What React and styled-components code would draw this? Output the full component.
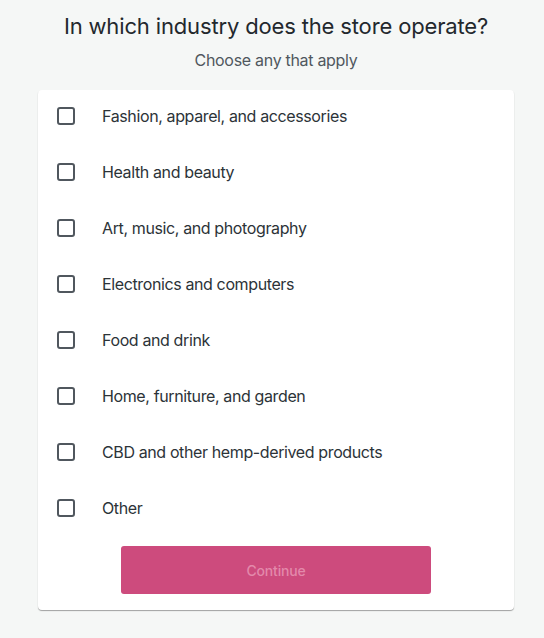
import React from 'react';
import styled, { createGlobalStyle } from 'styled-components';

const GlobalStyle = createGlobalStyle`
  body {
    margin: 0;
    background: #f5f7f6;
    font-family: Inter, "Open Sans", "Liberation Sans", sans-serif;
    -webkit-font-smoothing: antialiased;
  }
`

const Page = styled.div`
  display: flex;
  flex-direction: column;
  align-items: stretch;
  padding: 12px 30px 28px 38px;
`

const Title = styled.h1`
  margin: 0;
  text-align: center;
  font-size: 22px;
  font-weight: 400;
  line-height: 28px;
  color: #23282d;
  letter-spacing: -0.15px;
`

const Subtitle = styled.p`
  margin: 10px 0 20px;
  text-align: center;
  font-size: 16px;
  line-height: 20px;
  color: #50575e;
  letter-spacing: -0.3px;
`

const Card = styled.div`
  display: flex;
  flex-direction: column;
  gap: 4px;
  background: #fff;
  border-radius: 4px;
  box-shadow: 0 1px 1px rgba(0, 0, 0, 0.35);
  padding: 0 0 16px;
`

const Row = styled.label`
  display: flex;
  align-items: center;
  height: 52px;
  padding-left: 19px;
  cursor: pointer;
`

const Box = styled.span`
  box-sizing: border-box;
  width: 18px;
  height: 18px;
  border: 2px solid #50575e;
  border-radius: 3px;
  margin-right: 27px;
  flex-shrink: 0;
`

const Label = styled.span`
  font-size: 16px;
  color: #2c3338;
  letter-spacing: -0.38px;
`

const Button = styled.button`
  align-self: center;
  margin-top: 8px;
  width: 310px;
  height: 48px;
  border: none;
  border-radius: 3px;
  background: #cd4b7d;
  color: #e389ab;
  font-family: inherit;
  font-size: 14px;
  font-weight: 500;
  letter-spacing: -0.2px;
`

const options = [
  'Fashion, apparel, and accessories',
  'Health and beauty',
  'Art, music, and photography',
  'Electronics and computers',
  'Food and drink',
  'Home, furniture, and garden',
  'CBD and other hemp-derived products',
  'Other',
];

const App = () => {
  return (
    <Page>
      <GlobalStyle />
      <Title>In which industry does the store operate?</Title>
      <Subtitle>Choose any that apply</Subtitle>
      <Card>
        {options.map((o) => (
          <Row key={o}>
            <Box />
            <Label>{o}</Label>
          </Row>
        ))}
        <Button disabled>Continue</Button>
      </Card>
    </Page>
  )
}

export default App;
